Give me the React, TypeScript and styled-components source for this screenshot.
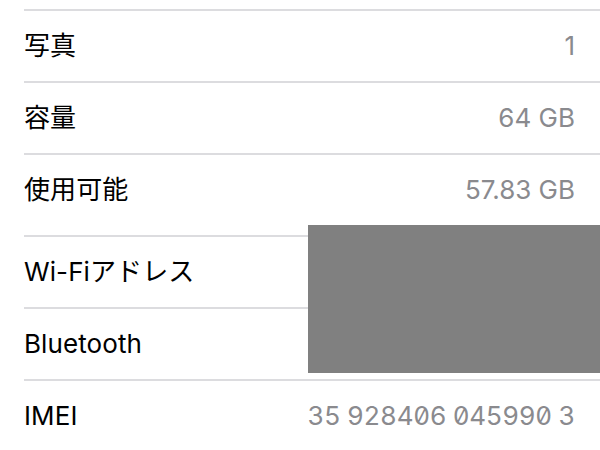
import React from "react";
import styled, { createGlobalStyle } from "styled-components";

const Global = createGlobalStyle`
  html, body { margin: 0; padding: 0; background: #ffffff; }
  body { width: 600px; height: 450px; overflow: hidden; }
`;

const Page = styled.div`
  width: 600px;
  height: 450px;
  background: #ffffff;
  padding-top: 9px;
  box-sizing: border-box;
  position: relative;
  font-family: Inter, "Noto Sans CJK JP", sans-serif;
`;

const List = styled.div`
  display: flex;
  flex-direction: column;
  padding-left: 24px;
`;

const Row = styled.div<{ $tall?: boolean }>`
  display: flex;
  align-items: flex-start;
  justify-content: space-between;
  height: ${(p) => (p.$tall ? 82 : 72)}px;
  border-top: 2px solid #dcdcdf;
  box-sizing: border-box;
  padding-right: 25px;
  padding-top: 19px;
`;

const Label = styled.span`
  font-size: 26px;
  line-height: 32px;
  color: #000000;
  letter-spacing: 0.1px;
`;

const Value = styled.span<{ $mono?: boolean }>`
  font-size: 26px;
  line-height: 32px;
  color: #8a8a8e;
  letter-spacing: ${(p) => (p.$mono ? "-0.35px" : "0")};
  font-feature-settings: ${(p) => (p.$mono ? "'tnum' 1, 'zero' 1" : "normal")};
`;

const Redaction = styled.div`
  position: absolute;
  left: 308px;
  top: 225px;
  width: 292px;
  height: 148px;
  background: #808080;
`;

const rows: { label: string; value: string; tall?: boolean; mono?: boolean }[] = [
  { label: "写真", value: "1" },
  { label: "容量", value: "64 GB" },
  { label: "使用可能", value: "57.83 GB", tall: true },
  { label: "Wi-Fiアドレス", value: "" },
  { label: "Bluetooth", value: "" },
  { label: "IMEI", value: "35 928406 045990 3", mono: true },
];

export default function App() {
  return (
    <Page>
      <Global />
      <List>
        {rows.map((r) => (
          <Row key={r.label} $tall={r.tall}>
            <Label>{r.label}</Label>
            <Value $mono={r.mono}>{r.value}</Value>
          </Row>
        ))}
      </List>
      <Redaction />
    </Page>
  );
}
